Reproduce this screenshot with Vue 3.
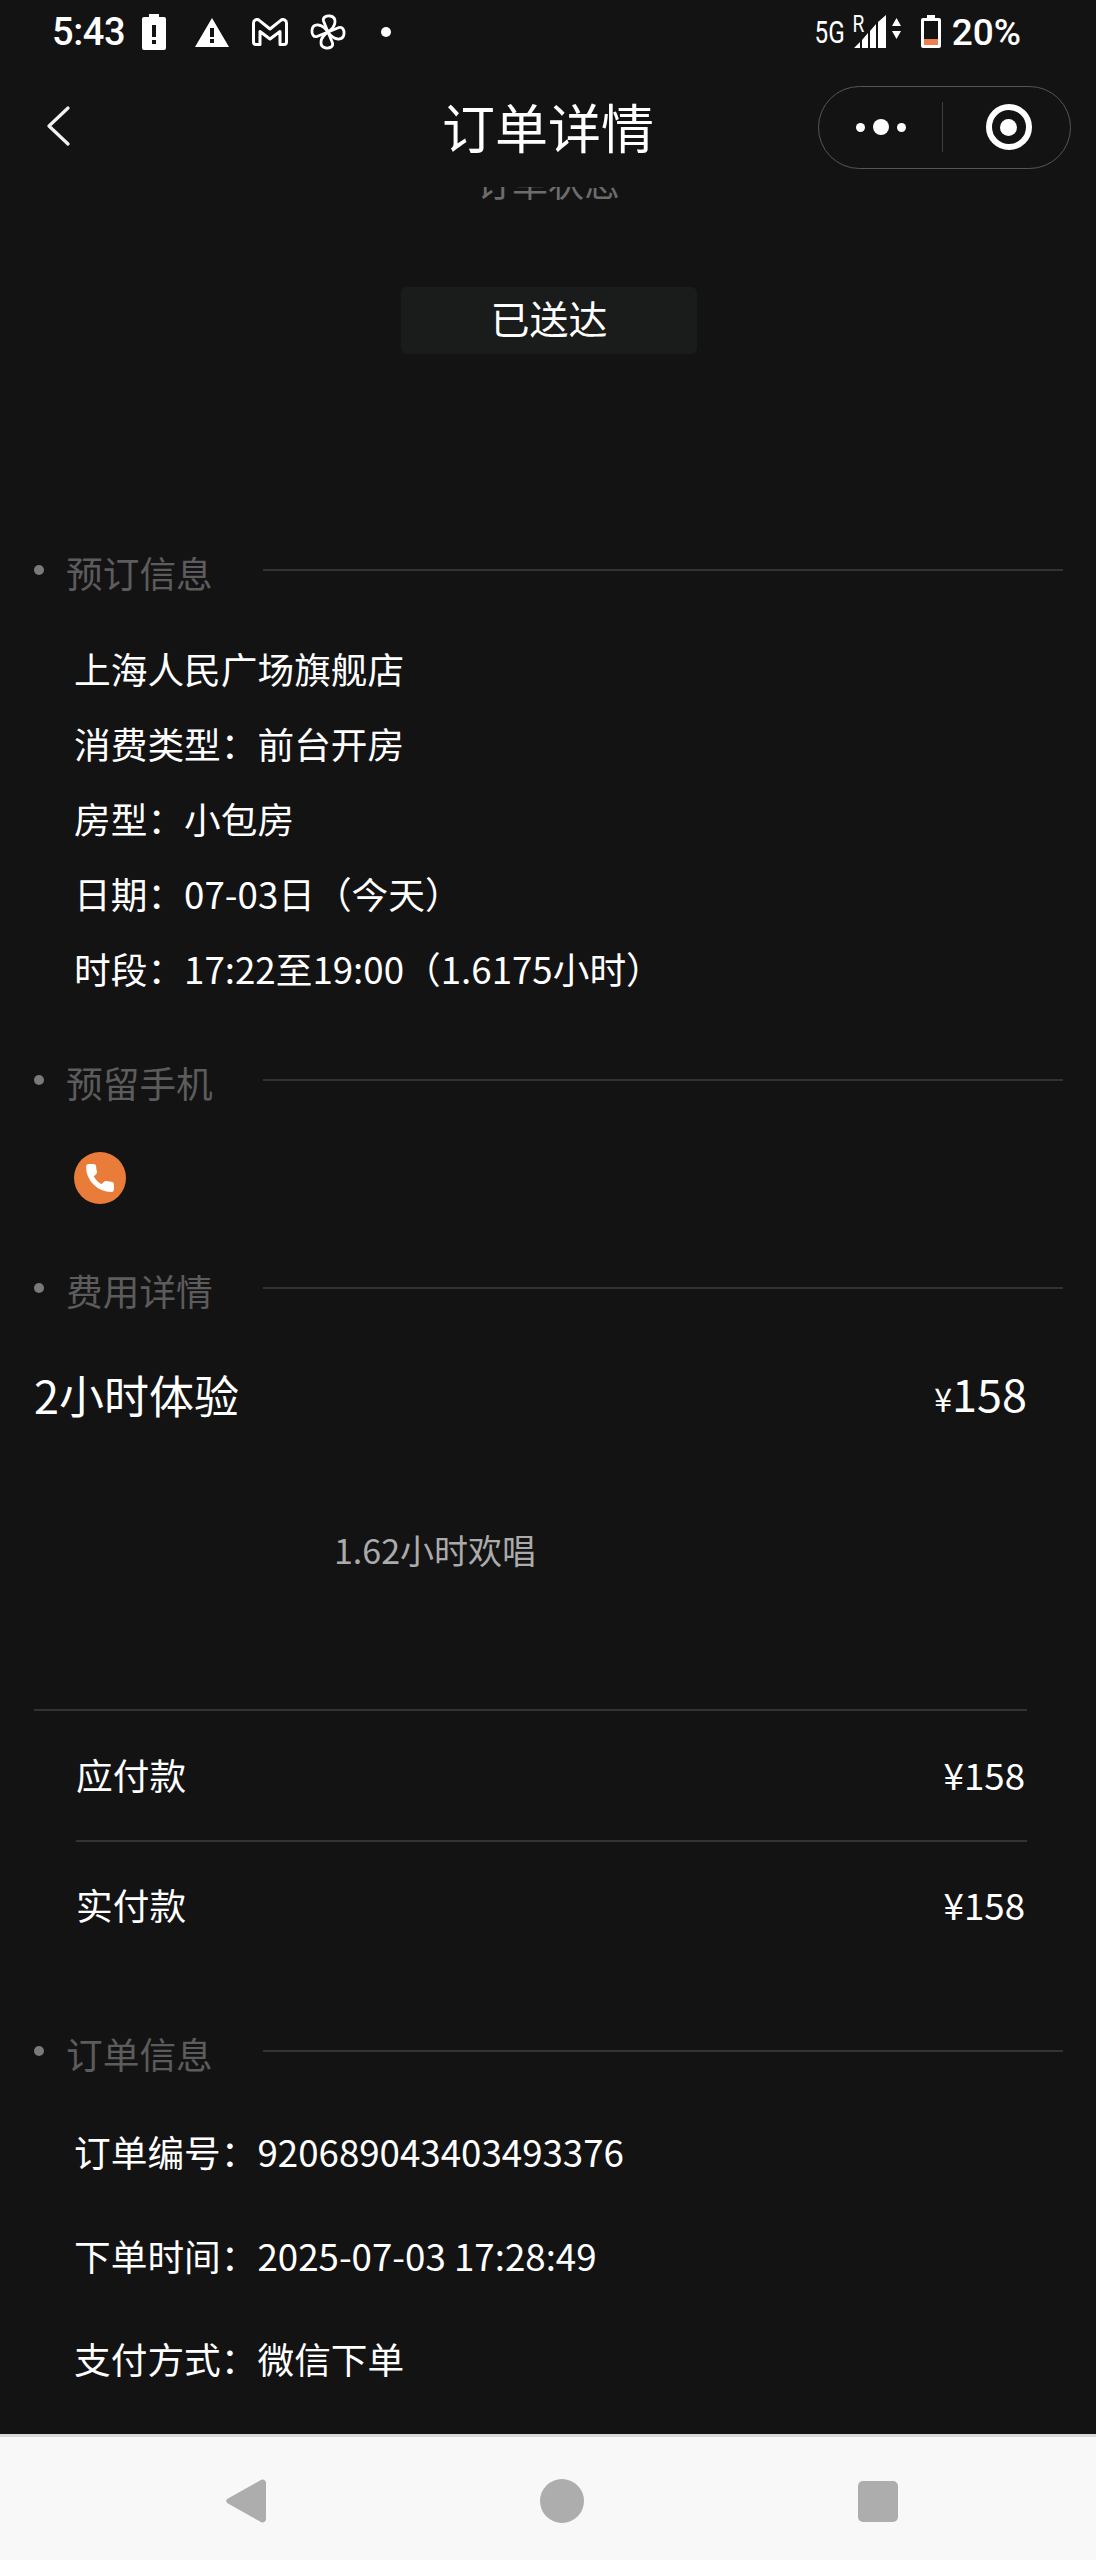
<script setup>
const colon = '\uFF1A'
const lp = '\uFF08'
const rp = '\uFF09'
const booking = [
  '上海人民广场旗舰店',
  `消费类型${colon}前台开房`,
  `房型${colon}小包房`,
  `日期${colon}07-03日${lp}今天${rp}`,
  `时段${colon}17:22至19:00${lp}1.6175小时${rp}`
]
const orderInfo = [
  `订单编号${colon}920689043403493376`,
  `下单时间${colon}2025-07-03 17:28:49`,
  `支付方式${colon}微信下单`
]
const blades = [0, 90, 180, 270]
</script>

<template>
  <div class="page">
    <header class="status">
      <div class="status-left">
        <span class="time">5:43</span>
        <svg class="ic" width="24" height="36" viewBox="0 0 24 36"><path fill="#fff" fill-rule="evenodd" d="M7 0h10v3h5a2 2 0 0 1 2 2v29a2 2 0 0 1-2 2H2a2 2 0 0 1-2-2V5a2 2 0 0 1 2-2h5zM10 11v12h4V11zM10 26v4h4v-4z"/></svg>
        <svg class="ic warn" width="34" height="29" viewBox="0 0 34 29"><path fill="#fff" fill-rule="evenodd" d="M17 0 34 29H0zM15 10v9h4v-9zM15 21v4h4v-4z"/></svg>
        <svg class="ic gm" width="36" height="28" viewBox="0 0 36 28"><path fill="none" stroke="#fff" stroke-width="3" stroke-linejoin="round" d="M1.500 5a3.500 3.500 0 0 1 5.700-2.700L18 11 28.800 2.300A3.500 3.500 0 0 1 34.500 5v19a2.500 2.500 0 0 1-2.500 2.500h-4V13.500L18 21 8 13.500v13H4A2.500 2.500 0 0 1 1.500 24z"/></svg>
        <svg class="ic fan" width="36" height="36" viewBox="0 0 36 36"><g fill="none" stroke="#fff" stroke-width="2.800" stroke-linejoin="round"><path v-for="a in blades" :key="a" :transform="`rotate(${a} 18 18)`" d="M18 18 13.500 7C12.500 3.500 16 1.500 20 2 27 3 27 12 18 18z"/></g></svg>
        <i class="dot-small"></i>
      </div>
      <div class="status-right">
        <span class="net">5G</span>
        <span class="roam">R</span>
        <svg class="signal" width="32" height="33" viewBox="0 0 32 33"><path fill="#fff" d="M0 33 6 27v6zM8 25l6-7v15H8zM16 16l6-7v24h-6zM24 7l8-7v33h-8z"/></svg>
        <svg class="arrows" width="9" height="21" viewBox="0 0 9 21"><path fill="#fff" d="M4.500 0 9 8H0zM0 13h9l-4.500 8z"/></svg>
        <svg class="batt" width="20" height="33" viewBox="0 0 20 33"><path fill="#fff" d="M6 0h8v3h4a2 2 0 0 1 2 2v26a2 2 0 0 1-2 2H2a2 2 0 0 1-2-2V5a2 2 0 0 1 2-2h4z"/><rect x="3" y="6" width="14" height="18" fill="#141314"/><rect x="3" y="24" width="14" height="6" fill="#ec7f4e"/></svg>
        <span class="pct">20%</span>
      </div>
    </header>

    <nav class="topbar">
      <svg class="back" width="24" height="40" viewBox="0 0 24 40"><path fill="none" stroke="#f2f2f2" stroke-width="3.200" stroke-linecap="round" stroke-linejoin="round" d="M22 2 3 20l19 18"/></svg>
      <h1 class="title">订单详情</h1>
      <div class="capsule">
        <div class="cap-side">
          <i class="d small"></i><i class="d big"></i><i class="d small"></i>
        </div>
        <i class="cap-sep"></i>
        <div class="cap-side right">
          <span class="target"><i></i></span>
        </div>
      </div>
    </nav>

    <main class="scroll">
      <p class="state-label">订单状态</p>
      <div class="badge"><span>已送达</span></div>

      <section class="booking">
        <div class="head"><i class="bullet"></i><span class="head-text">预订信息</span><i class="rule"></i></div>
        <ul class="rows">
          <li v-for="r in booking" :key="r">{{ r }}</li>
        </ul>
      </section>

      <section class="phone">
        <div class="head"><i class="bullet"></i><span class="head-text">预留手机</span><i class="rule"></i></div>
        <span class="call">
          <svg width="34" height="34" viewBox="0 0 24 24"><path fill="#fff" stroke="#fff" stroke-width="1.600" stroke-linejoin="round" d="M6.620 10.790c1.440 2.830 3.760 5.140 6.590 6.590l2.200-2.200c.27-.27.67-.36 1.020-.24 1.120.37 2.330.57 3.570.57.55 0 1 .45 1 1V20c0 .55-.45 1-1 1-9.390 0-17-7.610-17-17 0-.55.45-1 1-1h3.500c.55 0 1 .45 1 1 0 1.250.2 2.450.57 3.570.11.35.03.74-.25 1.020l-2.200 2.200z"/></svg>
        </span>
      </section>

      <section class="fees">
        <div class="head"><i class="bullet"></i><span class="head-text">费用详情</span><i class="rule"></i></div>
        <div class="fee-main">
          <span>2小时体验</span>
          <span class="fee-price"><small>¥</small>158</span>
        </div>
        <p class="fee-note">1.62小时欢唱</p>
        <div class="pay">
          <div class="pay-row"><span>应付款</span><span>¥158</span></div>
          <div class="pay-row"><span>实付款</span><span>¥158</span></div>
        </div>
      </section>

      <section class="order">
        <div class="head"><i class="bullet"></i><span class="head-text">订单信息</span><i class="rule"></i></div>
        <ul class="rows wide">
          <li v-for="r in orderInfo" :key="r">{{ r }}</li>
        </ul>
      </section>
    </main>

    <footer class="sysnav">
      <svg width="40" height="44" viewBox="0 0 40 44"><path fill="#adadad" d="M34 1.500c2-2 6-1 6 2.500v36c0 3.500-4 4.500-6 2.500L2 24.500c-2.400-1.500-2.400-3.500 0-5z"/></svg>
      <i class="home"></i>
      <i class="recent"></i>
    </footer>
  </div>
</template>

<style>
html, body { margin: 0; background: #141314; }
</style>

<style scoped>
.page {
  width: 1096px;
  height: 2560px;
  display: flex;
  flex-direction: column;
  overflow: hidden;
  background: #141314;
  color: #fff;
  font-family: "Noto Sans CJK SC", "Noto Sans", sans-serif;
}
ul, p, h1 { margin: 0; padding: 0; }
ul { list-style: none; }
i { display: block; }

.status {
  height: 64px;
  flex: none;
  display: flex;
  align-items: center;
  justify-content: space-between;
  padding: 0 75px 0 52px;
  font-family: Roboto, sans-serif;
}
.status-left, .status-right { display: flex; align-items: center; }
.time { font-size: 38px; font-weight: 500; letter-spacing: -.4px; }
.ic { margin-left: 17px; }
.warn { margin-left: 29px; }
.gm { margin-left: 23px; }
.fan { margin-left: 22px; }
.dot-small { width: 10px; height: 10px; margin-left: 35px; border-radius: 50%; background: #fff; }
.net { font-size: 32px; transform: scaleX(.76); transform-origin: right; margin-right: 6px; }
.roam { font-size: 24px; margin: -16px -12px 0 0; transform: scaleX(.8); }
.signal { margin-top: -1px; }
.arrows { margin: -7px 0 0 6px; }
.batt { margin: -1px 0 0 20px; }
.pct { font-size: 37px; font-weight: 500; margin-left: 11px; }

.topbar {
  height: 123px;
  flex: none;
  position: relative;
  display: flex;
  align-items: center;
  padding: 0 25px 0 46px;
  justify-content: space-between;
}
.title {
  position: absolute;
  left: 0;
  right: 0;
  text-align: center;
  font-size: 53px;
  font-weight: 400;
  line-height: 64px;
}
.capsule {
  width: 253px;
  height: 83px;
  margin-top: 3px;
  box-sizing: border-box;
  border: 1px solid #55555a;
  border-radius: 42px;
  display: flex;
  align-items: center;
}
.cap-side { flex: 1; display: flex; align-items: center; justify-content: center; gap: 8px; }
.cap-side.right { padding-left: 4px; }
.cap-sep { width: 1px; height: 50px; background: #3d3d3f; }
.d { background: #fff; border-radius: 50%; }
.small { width: 9px; height: 9px; }
.big { width: 16px; height: 16px; }
.target {
  width: 46px;
  height: 46px;
  box-sizing: border-box;
  border: 6px solid #fff;
  border-radius: 50%;
  display: flex;
  align-items: center;
  justify-content: center;
}
.target i { width: 17px; height: 17px; border-radius: 50%; background: #fff; }

.scroll { flex: 1; overflow: hidden; min-height: 0; }
.state-label {
  margin-top: -30px;
  text-align: center;
  font-size: 36px;
  line-height: 48px;
  color: #6c6c6c;
}
.badge {
  width: 296px;
  height: 67px;
  margin: 82px 0 0 401px;
  border-radius: 6px;
  background: #1a1b1b;
  display: flex;
  align-items: center;
  justify-content: center;
  font-size: 39px;
}
.badge span { line-height: 1; margin-top: -6px; }

.head {
  height: 48px;
  display: flex;
  align-items: center;
  padding: 0 33px 0 34px;
}
.bullet { width: 10px; height: 10px; border-radius: 50%; background: #7a7a7a; margin-top: -4px; }
.head-text { width: 197px; margin-left: 22px; font-size: 36.700px; line-height: 48px; color: #5c5c5c; flex: none; }
.rule { flex: 1; height: 2px; background: #333234; margin-top: -5px; }

.booking { margin-top: 194px; }
.rows { padding: 35px 0 0 74px; font-size: 36.700px; line-height: 75px; }
.rows.wide { padding-top: 23px; line-height: 103.500px; }
.phone { margin-top: 52px; }
.call {
  width: 52px;
  height: 52px;
  margin: 46px 0 0 74px;
  border-radius: 50%;
  background: #e97c38;
  display: flex;
  align-items: center;
  justify-content: center;
}
.fees { margin-top: 62px; }
.fee-main {
  display: flex;
  justify-content: space-between;
  align-items: center;
  margin: 48px 69px 0 34px;
  font-size: 45px;
  line-height: 60px;
}
.fee-price { transform: translateY(1px); }
.fee-price small { font-size: 32px; }
.fee-note {
  margin: 99px 0 0 334px;
  font-size: 34px;
  line-height: 48px;
  color: #ababab;
}
.pay { margin: 135px 69px 0 34px; border-top: 2px solid #333234; padding-left: 42px; }
.pay-row {
  height: 126px;
  padding: 0 2px 3px 0;
  display: flex;
  align-items: center;
  justify-content: space-between;
  font-size: 36.700px;
}
.pay-row + .pay-row { height: 123px; border-top: 2px solid #333234; }
.order { margin-top: 61px; }

.sysnav {
  height: 118px;
  flex: none;
  border-top: 3px solid #d9d9d9;
  padding: 5px 198px 0 226px;
  background: #f8f8f8;
  display: flex;
  align-items: center;
  justify-content: space-between;
}
.home { width: 44px; height: 44px; border-radius: 50%; background: #adadad; }
.recent { width: 40px; height: 41px; border-radius: 5px; background: #adadad; }
</style>
